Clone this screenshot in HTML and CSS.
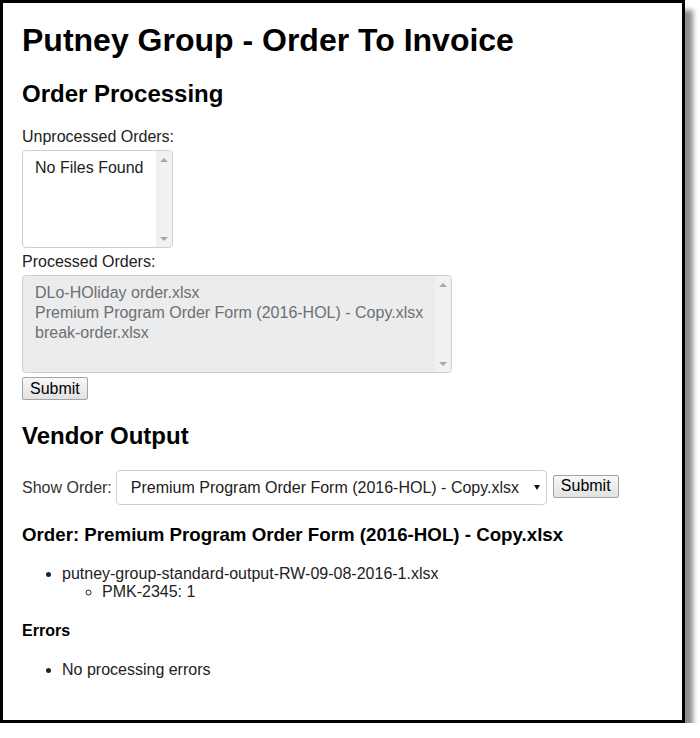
FILE: index.html
```html
<!DOCTYPE html>
<html lang="en">
<head>
<meta charset="utf-8">
<title>Putney Group - Order To Invoice</title>
<link rel="stylesheet" href="styles.css">
</head>
<body>
<div class="frame">
  <h1 class="title">Putney Group - Order To Invoice</h1>

  <h2 class="section section-first">Order Processing</h2>
  <div class="field-label">Unprocessed Orders:</div>
  <div class="listbox listbox-small">
    <div class="lb-options">
      <div class="lb-option">No Files Found</div>
    </div>
    <div class="lb-scroll">
      <span class="arrow-box"><span class="tri-up"></span></span>
      <span class="arrow-box"><span class="tri-down"></span></span>
    </div>
  </div>
  <div class="field-label">Processed Orders:</div>
  <div class="listbox listbox-wide disabled">
    <div class="lb-options">
      <div class="lb-option">DLo-HOliday order.xlsx</div>
      <div class="lb-option">Premium Program Order Form (2016-HOL) - Copy.xlsx</div>
      <div class="lb-option">break-order.xlsx</div>
    </div>
    <div class="lb-scroll">
      <span class="arrow-box"><span class="tri-up"></span></span>
      <span class="arrow-box"><span class="tri-down"></span></span>
    </div>
  </div>
  <button class="btn" type="button">Submit</button>

  <h2 class="section section-vendor">Vendor Output</h2>
  <div class="show-row">
    <span class="show-label">Show Order:</span>
    <div class="select">
      <span class="select-text">Premium Program Order Form (2016-HOL) - Copy.xlsx</span>
      <span class="caret"></span>
    </div>
    <button class="btn" type="button">Submit</button>
  </div>

  <h3 class="order-title">Order: Premium Program Order Form (2016-HOL) - Copy.xlsx</h3>
  <ul class="list">
    <li>putney-group-standard-output-RW-09-08-2016-1.xlsx
      <ul class="sublist">
        <li>PMK-2345: 1</li>
      </ul>
    </li>
  </ul>

  <h4 class="errors-title">Errors</h4>
  <ul class="list list-errors">
    <li>No processing errors</li>
  </ul>
</div>
</body>
</html>
```

FILE: styles.css
```css
html, body {
  margin: 0;
  padding: 0;
  background: #fff;
  overflow: hidden;
}

body {
  font-family: "Liberation Sans", Arial, sans-serif;
  font-size: 16px;
  color: #222;
}

.frame {
  width: 685px;
  height: 723px;
  box-sizing: border-box;
  border: 3px solid #000;
  padding: 0 19px;
  background: #fff;
  box-shadow: 9px 9px 5px -1px rgba(0, 0, 0, 0.45);
}

.title {
  font-size: 32px;
  font-weight: bold;
  color: #000;
  margin: 19px 0 21px;
}

.section {
  font-size: 24px;
  font-weight: bold;
  color: #000;
  margin: 0 0 20px;
}

.section-vendor {
  margin-top: 22px;
  margin-bottom: 20px;
}

.field-label {
  margin-bottom: 4px;
}

.listbox {
  display: flex;
  box-sizing: border-box;
  height: 98px;
  border: 1px solid #cfcfcf;
  border-radius: 4px;
  overflow: hidden;
  background: #fff;
  margin-bottom: 5px;
}

.listbox-small {
  width: 151px;
}

.listbox-wide {
  width: 430px;
  margin-bottom: 4px;
}

.listbox.disabled {
  background: #eaeced;
  color: #6f6f6f;
}

.lb-options {
  flex: 1;
  padding: 7px 12px 6px;
}

.lb-option {
  line-height: 20px;
  white-space: nowrap;
}

.lb-scroll {
  width: 17px;
  background: #f1f1f1;
  display: flex;
  flex-direction: column;
  justify-content: space-between;
}

.arrow-box {
  height: 17px;
  display: flex;
  align-items: center;
  justify-content: center;
}

.tri-up {
  width: 0;
  height: 0;
  border-left: 4px solid transparent;
  border-right: 4px solid transparent;
  border-bottom: 4px solid #a6a6a6;
}

.tri-down {
  width: 0;
  height: 0;
  border-left: 4px solid transparent;
  border-right: 4px solid transparent;
  border-top: 4px solid #a6a6a6;
}

.btn {
  font-family: "Liberation Sans", Arial, sans-serif;
  font-size: 16px;
  color: #000;
  height: 23px;
  padding: 0 7px;
  border: 1px solid #a3a3a3;
  border-radius: 2px;
  background: linear-gradient(#f8f8f8, #e2e2e2);
  display: block;
}

.show-row {
  display: flex;
  align-items: center;
}

.show-label {
  color: #333;
  margin-right: 4px;
}

.select {
  width: 431px;
  height: 35px;
  box-sizing: border-box;
  border: 1px solid #cfcfcf;
  border-radius: 4px;
  display: flex;
  align-items: center;
  justify-content: space-between;
  padding: 0 6px 0 14px;
  margin-right: 6px;
  color: #222;
}

.caret {
  width: 0;
  height: 0;
  border-left: 3px solid transparent;
  border-right: 3px solid transparent;
  border-top: 5px solid #111;
  margin-top: 0;
}

.show-row .btn {
  margin-top: -3px;
}

.order-title {
  font-size: 18.72px;
  font-weight: bold;
  color: #000;
  margin: 19px 0 19px;
}

.list {
  margin: 0 0 16px;
  padding-left: 40px;
  list-style: disc;
}

.sublist {
  margin: 0;
  padding-left: 40px;
  list-style: circle;
}

.errors-title {
  font-size: 16px;
  font-weight: bold;
  color: #000;
  margin: 21px 0 21px;
}
```
